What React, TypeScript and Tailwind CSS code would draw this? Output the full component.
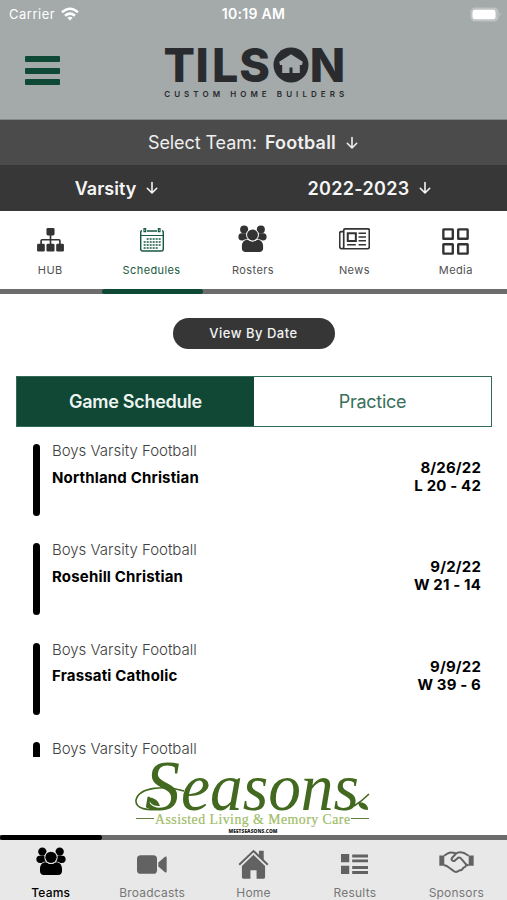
import type { ReactNode } from 'react'

function PeopleIcon({ className, gap }: { className: string; gap: string }) {
  return (
    <svg viewBox="110 51 90 84" className={className} fill="currentColor">
      <circle cx="129" cy="65" r="12.5" />
      <circle cx="181" cy="65" r="12.5" />
      <path d="M121 77h18l8 22h-24c-9 0-12-5-12-11s3-11 10-11zM189 77h-18l-8 22h24c9 0 12-5 12-11s-3-11-10-11z" />
      <path
        d="M140 97q15 10 30 0c11 0 18 8 18 20v7c0 7-5 11-11 11h-44c-6 0-11-4-11-11v-7c0-12 7-20 18-20z"
        stroke={gap}
        strokeWidth="5"
        paintOrder="stroke"
      />
      <circle cx="155" cy="82" r="17" stroke={gap} strokeWidth="6" paintOrder="stroke" />
    </svg>
  )
}

function HubIcon() {
  return (
    <svg viewBox="0 0 80 70" className="w-[27px] h-[23.5px]" fill="currentColor">
      <rect x="28" y="0" width="24" height="22" rx="4" />
      <rect x="0" y="47" width="23" height="23" rx="4" />
      <rect x="28" y="47" width="24" height="23" rx="4" />
      <rect x="57" y="47" width="23" height="23" rx="4" />
      <path d="M40 20v30M12 49V38q0-3 3-3h50q3 0 3 3v11" fill="none" stroke="currentColor" strokeWidth="5" />
    </svg>
  )
}

function CalendarIcon() {
  return (
    <svg viewBox="0 0 72 72" className="w-[24px] h-[24px]" fill="none" stroke="currentColor">
      <path d="M6 8q-4 0-4 6v49q0 6 6 6h56q6 0 6-6V14q0-6-4-6M21 9h30" strokeWidth="4.5" />
      <path d="M12 2h5v9h-5zM55 2h5v9h-5z" strokeWidth="3.5" />
      <path d="M2 22.5h68" strokeWidth="3" />
      <path d="M20 33h42M11 42h51M11 51h51M11 60h42" strokeWidth="6" strokeDasharray="6 3" strokeOpacity=".75" />
    </svg>
  )
}

function NewsIcon() {
  return (
    <svg viewBox="0 0 92 64" className="w-[31px] h-[22px] mb-0.5" fill="none" stroke="currentColor" strokeWidth="5">
      <path d="M14 57V6q0-4 4-4h68q4 0 4 4v49q0 6-6 6H9q-7 0-7-7V15q0-5 5-5h7M14 55q0 6-6 6" />
      <rect x="26" y="15" width="24" height="23" strokeWidth="6" />
      <path d="M58 15h22M58 26h22M58 37h22M24 49h26M58 49h22" strokeWidth="4.5" />
    </svg>
  )
}

function MediaIcon() {
  return (
    <svg viewBox="0 0 80 80" className="w-[27px] h-[27px] mt-0.5" fill="none" stroke="currentColor" strokeWidth="7">
      <rect x="4" y="4" width="28" height="28" rx="1" />
      <rect x="48" y="4" width="28" height="28" rx="1" />
      <rect x="4" y="48" width="28" height="28" rx="1" />
      <rect x="48" y="48" width="28" height="28" rx="1" />
    </svg>
  )
}

function CameraIcon() {
  return (
    <svg viewBox="0 0 90 56" className="w-[30px] h-[19px]" fill="currentColor">
      <rect x="0" y="0" width="60" height="56" rx="11" />
      <path d="M64 22 84 5q5-3 5 3v40q0 6-5 3L64 34z" />
    </svg>
  )
}

function HomeIcon() {
  return (
    <svg viewBox="0 0 90 88" className="w-[31px] h-[30px]" fill="currentColor">
      <path d="M11 50 45 17l34 33v33q0 4-4 4H54V62H36v25H15q-4 0-4-4z" />
      <path d="M3 46 45 6l42 40" fill="none" stroke="currentColor" strokeWidth="6" />
      <path d="M61 5h14v30L61 21z" />
    </svg>
  )
}

function ResultsIcon() {
  return (
    <svg viewBox="0 0 82 60" className="w-[27px] h-[20px]" fill="currentColor">
      <path d="M0 0h25v25H0zM0 35h25v25H0z" />
      <path d="M34 1h48v9H34zM34 16h48v9H34zM34 36h48v9H34zM34 51h48v9H34z" />
    </svg>
  )
}

function HandshakeIcon() {
  return (
    <svg viewBox="0 0 106 66" className="w-[35px] h-[22px] mb-1" fill="none" stroke="currentColor" strokeWidth="6" strokeLinejoin="round">
      <path d="M1 13h15v31H1zM90 13h15v31H90z" fill="currentColor" stroke="none" />
      <path d="M15 14C23 10 27 4 35 4q9 0 17 3M90 14C82 10 78 4 70 4c-9-1-14-1-19 4L40 20c-5 6 2 13 9 8l9-8c5-2 8 1 11 5l11 13c5 6-1 11-6 12-3 7-8 9-13 9-6 5-13 5-18 0L29 49q-7-6-14-6" />
      <path d="M90 43q-5 0-9-3" />
    </svg>
  )
}

function DownArrow() {
  return (
    <svg viewBox="0 0 12 14" className="w-[12px] h-[14px]" fill="none" stroke="currentColor" strokeWidth="1.6">
      <path d="M6 1.5v10.5M1.3 7.3 6 12l4.7-4.7" strokeLinejoin="round" strokeLinecap="round" />
    </svg>
  )
}

function TilsonLogo() {
  return (
    <svg viewBox="160 44 190 58" className="w-[190px] h-[58px] overflow-visible" fill="#292b2f">
      <text x="163.5 195.6 212.1 239.2" y="81.8" fontSize="46.5" fontWeight="800" fontFamily="Inter, sans-serif">
        TILS
      </text>
      <circle cx="291" cy="65" r="17.5" />
      <path d="M291 54.3 302.8 61.8l-.8 3.2h-2.2v8h-7.3v-5.5h-3v5.500h-7.300v-8h-2.200l-.8-3.200z" fill="#a4a9a9" />
      <text
        x="309.8"
        y="81.8"
        fontSize="46.5"
        fontWeight="800"
        fontFamily="Inter, sans-serif"
        textLength="35.500"
        lengthAdjust="spacingAndGlyphs"
      >
        N
      </text>
      <text x="164.2" y="97" fontSize="8" fontWeight="600" fontFamily="Inter, sans-serif" textLength="180" lengthAdjust="spacing">
        CUSTOM HOME BUILDERS
      </text>
    </svg>
  )
}

function SeasonsBanner() {
  return (
    <svg viewBox="130 757 250 78" className="w-[250px] h-[78px] overflow-visible">
      <g fill="#42691f" fontStyle="italic" fontFamily="'Liberation Serif', serif">
        <text x="146" y="809.5" fontSize="72" textLength="35" lengthAdjust="spacingAndGlyphs">
          S
        </text>
        <text x="182" y="810" fontSize="68" textLength="178" lengthAdjust="spacingAndGlyphs">
          easons
        </text>
        <path d="M149 797q10 1 12 9-10 1-12-9zM359 802q10 0 10 8-9 0-10-8z" />
      </g>
      <path
        d="M185 791c-19-6-45-4-48 9-1 9 12 11 25 9M355 806q8-5 15-12"
        fill="none"
        stroke="#42691f"
        strokeWidth="1.6"
      />
      <path d="M137 818.5h18M352 818.5h18" stroke="#647f43" strokeWidth="1" />
      <text
        x="156"
        y="824"
        fontSize="13.8"
        fill="#a0bd68"
        stroke="#a0bd68"
        strokeWidth=".2"
        fontFamily="'Liberation Serif', serif"
        textLength="195"
      >
        Assisted Living &amp; Memory Care
      </text>
      <text x="229.5" y="832.6" fontSize="4.8" fontWeight="800" fill="#222" fontFamily="'Open Sans', sans-serif" textLength="49">
        MEETSEASONS.COM
      </text>
    </svg>
  )
}

const games = [
  { opponent: 'Northland Christian', date: '8/26/22', score: 'L 20 - 42' },
  { opponent: 'Rosehill Christian', date: '9/2/22', score: 'W 21 - 14' },
  { opponent: 'Frassati Catholic', date: '9/9/22', score: 'W 39 - 6' },
  { opponent: '', date: '', score: '' },
]

const topTabs: { label: string; icon: ReactNode }[] = [
  { label: 'HUB', icon: <HubIcon /> },
  { label: 'Schedules', icon: <CalendarIcon /> },
  { label: 'Rosters', icon: <PeopleIcon className="w-[29px] h-[27px] mb-1" gap="#ffffff" /> },
  { label: 'News', icon: <NewsIcon /> },
  { label: 'Media', icon: <MediaIcon /> },
]

const bottomTabs: { label: string; icon: ReactNode }[] = [
  { label: 'Teams', icon: <PeopleIcon className="w-[30px] h-[28px] mb-1.5" gap="#e8e8e8" /> },
  { label: 'Broadcasts', icon: <CameraIcon /> },
  { label: 'Home', icon: <HomeIcon /> },
  { label: 'Results', icon: <ResultsIcon /> },
  { label: 'Sponsors', icon: <HandshakeIcon /> },
]

export default function App() {
  return (
    <div className="w-[507px] h-[900px] flex flex-col bg-white overflow-hidden font-['Inter',sans-serif] text-black">
      <header className="h-[120px] shrink-0 bg-[#a4a9a9] border-b border-[#858787]">
        <div className="h-[28px] grid grid-cols-3 items-center text-white text-[13px] leading-none">
          <div className="flex items-center gap-1.5 pl-[9px] tracking-[0.5px]">
            Carrier
            <svg viewBox="0 0 18 14" className="w-[18px] h-[14px]" fill="none" stroke="white" strokeWidth="2.5">
              <path d="M1 5.2q8-7 16 0M4 8.7q5-4.2 10 0" />
              <path d="M6.3 10.8q2.7-2 5.4 0L9 13.5z" fill="white" stroke="none" />
            </svg>
          </div>
          <span className="text-center font-semibold text-[14px] tracking-[0.3px]">10:19 AM</span>
          <svg viewBox="0 0 31 15" className="w-[31px] h-[15px] justify-self-end mr-[6px]">
            <rect x=".5" y=".5" width="28" height="14" rx="4.5" fill="#bfc2c2" />
            <rect x="2.5" y="2.8" width="23" height="9.4" rx="2.5" fill="white" />
            <path d="M29.5 5.5q2 2 0 4z" fill="#c8caca" />
          </svg>
        </div>
        <div className="flex pl-[25px] pt-4">
          <div className="w-[35px] flex flex-col gap-[5.5px] pt-3">
            <span className="h-[6px] bg-[#0d4934] rounded-[1px]" />
            <span className="h-[6px] bg-[#0d4934] rounded-[1px]" />
            <span className="h-[6px] bg-[#0d4934] rounded-[1px]" />
          </div>
          <div className="ml-[100px]">
            <TilsonLogo />
          </div>
        </div>
      </header>

      <div className="h-[45px] shrink-0 bg-[#4b4b4b] text-[#efefef] flex items-center justify-center pr-px text-[18px]">
        <span className="tracking-[-0.1px]">Select Team:</span>
        <span className="ml-2 mr-2.5 font-semibold tracking-[0.2px]">Football</span>
        <DownArrow />
      </div>
      <div className="h-[46px] shrink-0 bg-[#373737] text-[#f5f5f5] grid grid-cols-[233px_273px] text-[18px] font-semibold">
        <div className="flex items-center justify-center gap-2.5">
          Varsity
          <DownArrow />
        </div>
        <div className="flex items-center justify-center gap-2.5">
          <span className="tracking-[0.3px]">2022-2023</span>
          <DownArrow />
        </div>
      </div>

      <nav className="h-[78px] shrink-0 grid grid-cols-5">
        {topTabs.map((tab, i) => (
          <div key={tab.label} className={`flex flex-col items-center pt-[12px] ${i === 1 ? 'text-[#175a40]' : 'text-[#333]'}`}>
            <div className="h-[34px] pr-px flex items-center justify-center">{tab.icon}</div>
            <span className={`mt-[5px] pr-px text-[11px] tracking-[0.4px] ${i === 1 ? '' : 'text-[#505050]'}`}>{tab.label}</span>
          </div>
        ))}
      </nav>
      <div className="h-[5px] shrink-0 bg-[#6c6c6c]">
        <div className="ml-[102px] w-[101px] h-[5px] rounded-full bg-[#0d4934]" />
      </div>

      <main className="h-[463px] shrink-0 overflow-hidden">
        <button className="block mx-auto mt-6 w-[162px] h-[31px] rounded-full bg-[#363636] text-[#f2f2f2] text-[13px] font-medium tracking-[0.5px]">
          View By Date
        </button>
        <div className="mt-[27px] ml-4 mr-[15px] h-[51px] grid grid-cols-2 border border-[#316b54] text-[18px]">
          <div className="bg-[#104735] text-[#eef5f1] font-semibold tracking-[-0.3px] flex items-center justify-center">
            Game Schedule
          </div>
          <div className="text-[#3a6f59] tracking-[-0.3px] flex items-center justify-center">Practice</div>
        </div>

        <div className="pt-[17px]">
          {games.map((game, i) => (
            <div key={i} className="h-[99.4px] flex pl-[33px] pr-[26px]">
              <div className="w-[7px] h-[72px] rounded-full bg-black" />
              <div className="ml-3">
                <p className="text-[15px] leading-[14px] text-[#404040] font-light tracking-[-0.02px]">Boys Varsity Football</p>
                <p className="mt-[7.6px] text-[15px] leading-[24px] font-bold tracking-[0.17px]">{game.opponent}</p>
              </div>
              <div className="ml-auto pt-[15px] text-right text-[15px] leading-[18px] font-bold tracking-[0.15px]">
                <p>{game.date}</p>
                <p>{game.score}</p>
              </div>
            </div>
          ))}
        </div>
      </main>

      <div className="h-[78px] shrink-0 flex justify-center">
        <SeasonsBanner />
      </div>
      <div className="h-[5px] shrink-0 bg-[#6c6c6c]">
        <div className="w-[102px] h-[5px] rounded-full bg-black" />
      </div>
      <nav className="h-[60px] shrink-0 grid grid-cols-5 bg-[#e8e8e8]">
        {bottomTabs.map((tab, i) => (
          <div key={tab.label} className={`flex flex-col items-center pt-[6px] ${i === 0 ? 'text-black' : 'text-[#626262]'}`}>
            <div className="h-[36px] flex items-center justify-center">{tab.icon}</div>
            <span className={`mt-[2px] text-[12px] leading-[18px] tracking-[0.2px] ${i === 0 ? 'font-medium' : 'text-[#777]'}`}>
              {tab.label}
            </span>
          </div>
        ))}
      </nav>
    </div>
  )
}
